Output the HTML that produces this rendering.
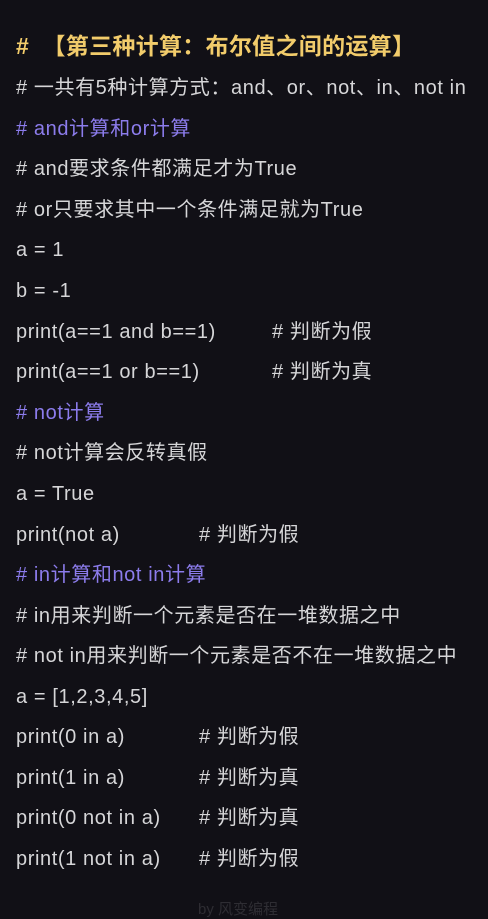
<!DOCTYPE html>
<html><head><meta charset="utf-8"><style>
html,body{margin:0;padding:0;}
body{width:488px;height:908px;background:#111016;position:relative;overflow:hidden;font-family:"Liberation Sans","Noto Sans CJK SC",sans-serif;}
.l{position:absolute;left:16px;font-size:20px;letter-spacing:0.6px;line-height:24px;color:#d6d6d8;white-space:pre;}
.t{color:#f2cc6b;font-weight:bold;font-size:23px;letter-spacing:0.3px;line-height:28px;}
.p{color:#8c7cec;}
.c{position:absolute;font-size:20px;letter-spacing:0.6px;line-height:24px;color:#d6d6d8;white-space:pre;}
</style></head><body>
<div class="l t" style="top:32px">#  【第三种计算：布尔值之间的运算】</div>
<div class="l" style="top:76px"># 一共有5种计算方式：and、or、not、in、not in</div>
<div class="l p" style="top:117px"># and计算和or计算</div>
<div class="l" style="top:157px"># and要求条件都满足才为True</div>
<div class="l" style="top:198px"># or只要求其中一个条件满足就为True</div>
<div class="l" style="top:238px">a = 1</div>
<div class="l" style="top:279px">b = -1</div>
<div class="l" style="top:320px">print(a==1 and b==1)</div><div class="c" style="top:320px;left:272px"># 判断为假</div>
<div class="l" style="top:360px">print(a==1 or b==1)</div><div class="c" style="top:360px;left:272px"># 判断为真</div>
<div class="l p" style="top:401px"># not计算</div>
<div class="l" style="top:441px"># not计算会反转真假</div>
<div class="l" style="top:482px">a = True</div>
<div class="l" style="top:523px">print(not a)</div><div class="c" style="top:523px;left:199px"># 判断为假</div>
<div class="l p" style="top:563px"># in计算和not in计算</div>
<div class="l" style="top:604px"># in用来判断一个元素是否在一堆数据之中</div>
<div class="l" style="top:644px"># not in用来判断一个元素是否不在一堆数据之中</div>
<div class="l" style="top:685px">a = [1,2,3,4,5]</div>
<div class="l" style="top:725px">print(0 in a)</div><div class="c" style="top:725px;left:199px"># 判断为假</div>
<div class="l" style="top:766px">print(1 in a)</div><div class="c" style="top:766px;left:199px"># 判断为真</div>
<div class="l" style="top:806px">print(0 not in a)</div><div class="c" style="top:806px;left:199px"># 判断为真</div>
<div class="l" style="top:847px">print(1 not in a)</div><div class="c" style="top:847px;left:199px"># 判断为假</div>
<div style="position:absolute;left:198px;top:901px;font-size:15px;line-height:18px;color:#2e2d33;">by 风变编程</div>
</body></html>
